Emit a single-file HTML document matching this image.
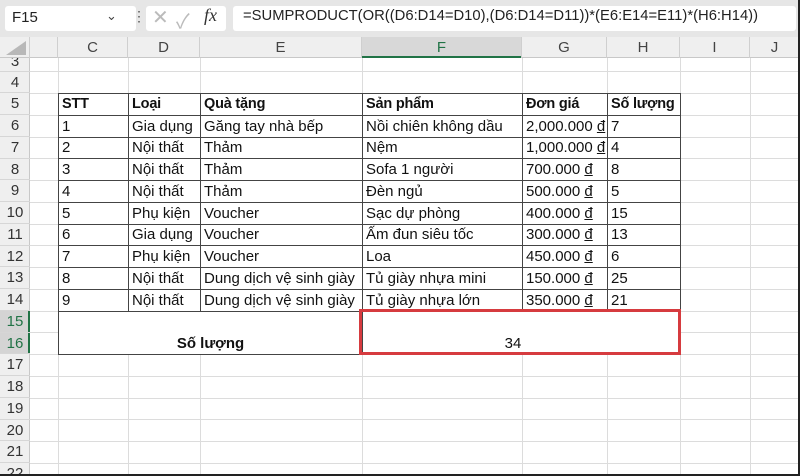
<!DOCTYPE html>
<html><head><meta charset="utf-8"><style>
*{margin:0;padding:0;box-sizing:border-box}
html,body{width:800px;height:476px;overflow:hidden}
body{background:#fff;font-family:"Liberation Sans","Noto Sans CJK SC",sans-serif;position:relative}
.a{position:absolute}
#fb{left:0;top:0;width:800px;height:37px;background:#e6e6e6}
.box{background:#fff;border-radius:3px}
#colh{left:0;top:37px;width:800px;height:21px;background:#efefef;border-bottom:1px solid #c8c8c8}
.ch{position:absolute;top:37px;height:21px;border-right:1px solid #cfcfcf;text-align:center;font-size:15px;line-height:22px;color:#444}
#rowh{left:0;top:58px;width:30px;height:418px;background:#efefef;border-right:1px solid #c8c8c8}
.rh{position:absolute;left:0;width:30px;text-align:center;font-size:15px;color:#333;border-bottom:1px solid #d6d6d6}
.vl{position:absolute;top:58px;height:418px;width:1px;background:#dcdcdc}
.hl{position:absolute;left:30px;width:770px;height:1px;background:#dcdcdc}
table{position:absolute;left:58px;top:93px;border-collapse:collapse;font-size:15px;color:#111;background:#fff;table-layout:fixed;width:622px}
td{border:1px solid #444;height:21.75px;padding:0 3px;white-space:nowrap;overflow:hidden;line-height:20px;vertical-align:bottom}
th{border:1px solid #444;height:21.75px;padding:0 3px;text-align:left;font-weight:bold;line-height:20px;white-space:nowrap;overflow:hidden;font-size:14.5px;letter-spacing:-0.2px}
u{text-decoration:underline;text-underline-offset:1px}
</style></head><body>
<div class="a" id="fb"></div>
<div class="a box" style="left:5px;top:6px;width:131px;height:25px"></div>
<div class="a" style="left:12px;top:9px;font-size:15px;color:#222">F15</div>
<div class="a" style="left:106px;top:8px;font-size:13px;color:#444">&#8964;</div>
<div class="a" style="left:132px;top:8px;font-size:14px;color:#555">&#8942;</div>
<div class="a box" style="left:146px;top:6px;width:80px;height:25px"></div>
<div class="a" style="left:152px;top:5px;font-size:20px;color:#bbb">&#10005;</div>
<div class="a" style="left:176px;top:5px;font-size:20px;color:#bbb">&#10003;</div>
<div class="a" style="left:204px;top:5px;font-size:18px;font-style:italic;font-family:'Liberation Serif',serif;color:#333">fx</div>
<div class="a box" style="left:233px;top:6px;width:563px;height:25px"></div>
<div class="a" style="left:243px;top:8px;font-size:14.8px;color:#222">=SUMPRODUCT(OR((D6:D14=D10),(D6:D14=D11))*(E6:E14=E11)*(H6:H14))</div>
<div class="a" id="colh"></div>
<div class="a" style="left:362px;top:37px;width:160px;height:21px;background:#d8d8d8;border-bottom:2px solid #217346"></div>
<div class="a" style="left:6px;top:41px;width:0;height:0;border-left:20px solid transparent;border-bottom:14px solid #b8b8b8"></div>
<div class="ch" style="left:0;width:30px"></div>
<div class="ch" style="left:30px;width:28px"></div>
<div class="ch" style="left:58px;width:70px">C</div>
<div class="ch" style="left:128px;width:72px">D</div>
<div class="ch" style="left:200px;width:162px">E</div>
<div class="ch" style="left:362px;width:160px;color:#217346">F</div>
<div class="ch" style="left:522px;width:85px">G</div>
<div class="ch" style="left:607px;width:73px">H</div>
<div class="ch" style="left:680px;width:70px">I</div>
<div class="ch" style="left:750px;width:50px">J</div>
<div class="hl" style="top:71px"></div><div class="hl" style="top:93px"></div><div class="hl" style="top:115px"></div><div class="hl" style="top:137px"></div><div class="hl" style="top:158px"></div><div class="hl" style="top:180px"></div><div class="hl" style="top:202px"></div><div class="hl" style="top:224px"></div><div class="hl" style="top:245px"></div><div class="hl" style="top:267px"></div><div class="hl" style="top:289px"></div><div class="hl" style="top:311px"></div><div class="hl" style="top:332px"></div><div class="hl" style="top:354px"></div><div class="hl" style="top:376px"></div><div class="hl" style="top:398px"></div><div class="hl" style="top:419px"></div><div class="hl" style="top:441px"></div><div class="hl" style="top:463px"></div>
<div class="vl" style="left:58px"></div><div class="vl" style="left:128px"></div><div class="vl" style="left:200px"></div><div class="vl" style="left:362px"></div><div class="vl" style="left:522px"></div><div class="vl" style="left:607px"></div><div class="vl" style="left:680px"></div><div class="vl" style="left:750px"></div>
<div class="a" id="rowh"></div>
<div class="a" style="left:0;top:310px;width:30px;height:44px;background:#d4d4d4;border-right:2px solid #217346"></div>
<div class="rh" style="top:58px;height:13.5px;line-height:8px;overflow:hidden">3</div>
<div class="rh" style="top:71.5px;height:21.75px;line-height:22px">4</div>
<div class="rh" style="top:93.25px;height:21.75px;line-height:22px">5</div>
<div class="rh" style="top:115px;height:21.75px;line-height:22px">6</div>
<div class="rh" style="top:136.75px;height:21.75px;line-height:22px">7</div>
<div class="rh" style="top:158.5px;height:21.75px;line-height:22px">8</div>
<div class="rh" style="top:180.25px;height:21.75px;line-height:22px">9</div>
<div class="rh" style="top:202px;height:21.75px;line-height:22px">10</div>
<div class="rh" style="top:223.75px;height:21.75px;line-height:22px">11</div>
<div class="rh" style="top:245.5px;height:21.75px;line-height:22px">12</div>
<div class="rh" style="top:267.25px;height:21.75px;line-height:22px">13</div>
<div class="rh" style="top:289px;height:21.75px;line-height:22px">14</div>
<div class="rh" style="top:310.75px;height:21.75px;line-height:22px;color:#217346">15</div>
<div class="rh" style="top:332.5px;height:21.75px;line-height:22px;color:#217346">16</div>
<div class="rh" style="top:354.25px;height:21.75px;line-height:22px">17</div>
<div class="rh" style="top:376px;height:21.75px;line-height:22px">18</div>
<div class="rh" style="top:397.75px;height:21.75px;line-height:22px">19</div>
<div class="rh" style="top:419.5px;height:21.75px;line-height:22px">20</div>
<div class="rh" style="top:441.25px;height:21.75px;line-height:22px">21</div>
<div class="rh" style="top:463px;height:13px;line-height:22px;overflow:hidden">22</div>
<table>
<colgroup><col style="width:70px"><col style="width:72px"><col style="width:162px"><col style="width:160px"><col style="width:85px"><col style="width:73px"></colgroup>
<tr><th>STT</th><th>Loại</th><th>Quà tặng</th><th>Sản phẩm</th><th>Đơn giá</th><th>Số lượng</th></tr>
<tr><td>1</td><td>Gia dụng</td><td>Găng tay nhà bếp</td><td>Nồi chiên không dầu</td><td>2,000.000 <u>đ</u></td><td>7</td></tr>
<tr><td>2</td><td>Nội thất</td><td>Thảm</td><td>Nệm</td><td>1,000.000 <u>đ</u></td><td>4</td></tr>
<tr><td>3</td><td>Nội thất</td><td>Thảm</td><td>Sofa 1 người</td><td>700.000 <u>đ</u></td><td>8</td></tr>
<tr><td>4</td><td>Nội thất</td><td>Thảm</td><td>Đèn ngủ</td><td>500.000 <u>đ</u></td><td>5</td></tr>
<tr><td>5</td><td>Phụ kiện</td><td>Voucher</td><td>Sạc dự phòng</td><td>400.000 <u>đ</u></td><td>15</td></tr>
<tr><td>6</td><td>Gia dụng</td><td>Voucher</td><td>Ấm đun siêu tốc</td><td>300.000 <u>đ</u></td><td>13</td></tr>
<tr><td>7</td><td>Phụ kiện</td><td>Voucher</td><td>Loa</td><td>450.000 <u>đ</u></td><td>6</td></tr>
<tr><td>8</td><td>Nội thất</td><td>Dung dịch vệ sinh giày</td><td>Tủ giày nhựa mini</td><td>150.000 <u>đ</u></td><td>25</td></tr>
<tr><td>9</td><td>Nội thất</td><td>Dung dịch vệ sinh giày</td><td>Tủ giày nhựa lớn</td><td>350.000 <u>đ</u></td><td>21</td></tr>
<tr><td colspan="3" rowspan="2" style="text-align:center;font-weight:bold;height:43.5px">Số lượng</td><td colspan="3" rowspan="2" style="text-align:center;padding-right:20px">34</td></tr>
<tr></tr>
</table>
<div class="a" style="left:359px;top:309px;width:322px;height:46px;border:3px solid #d63b3f"></div>
<div class="a" style="left:0;top:474px;width:800px;height:2px;background:#222"></div>
<div class="a" style="left:798px;top:0;width:2px;height:476px;background:#222"></div>
</body></html>
